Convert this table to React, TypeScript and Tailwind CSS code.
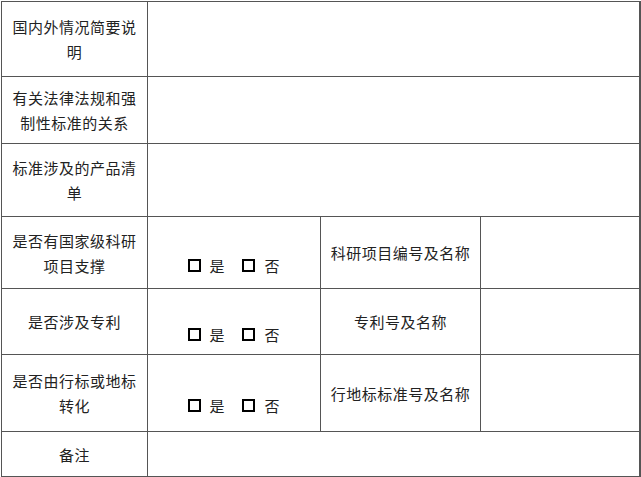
const font = { fontFamily: '"Noto Sans CJK SC", "Noto Sans", sans-serif' };

function Cell({ children, span = false }: { children?: React.ReactNode; span?: boolean }) {
  return (
    <div
      className={`flex flex-col items-center justify-center bg-white px-2 text-center text-[15px] leading-[25px] tracking-[0.5px] text-[#222] ${
        span ? "col-span-3" : ""
      }`}
    >
      {children}
    </div>
  );
}

function Box() {
  return <span className="inline-block h-[13px] w-[13px] border-2 border-black" />;
}

function YesNo() {
  return (
    <div className="flex flex-col items-center justify-center bg-white text-[15px] leading-[25px] text-[#222]">
      <div className="h-[25px]" />
      <div className="flex items-center">
        <Box />
        <span className="ml-[8px]">是</span>
        <span className="ml-[17px]">
          <Box />
        </span>
        <span className="ml-[10px]">否</span>
      </div>
    </div>
  );
}

export default function App() {
  return (
    <div className="h-[477px] w-[641px] bg-white pl-px pt-px" style={font}>
      <div className="grid grid-cols-[145px_172px_159px_158px] grid-rows-[74px_66px_72px_71px_65px_76px_44px] gap-px bg-[#555] p-px">
        <Cell>国内外情况简要说明</Cell>
        <Cell span />

        <Cell>有关法律法规和强制性标准的关系</Cell>
        <Cell span />

        <Cell>标准涉及的产品清单</Cell>
        <Cell span />

        <Cell>是否有国家级科研项目支撑</Cell>
        <YesNo />
        <Cell>科研项目编号及名称</Cell>
        <Cell />

        <Cell>是否涉及专利</Cell>
        <YesNo />
        <Cell>专利号及名称</Cell>
        <Cell />

        <Cell>是否由行标或地标转化</Cell>
        <YesNo />
        <Cell>行地标标准号及名称</Cell>
        <Cell />

        <Cell>备注</Cell>
        <Cell span />
      </div>
    </div>
  );
}
